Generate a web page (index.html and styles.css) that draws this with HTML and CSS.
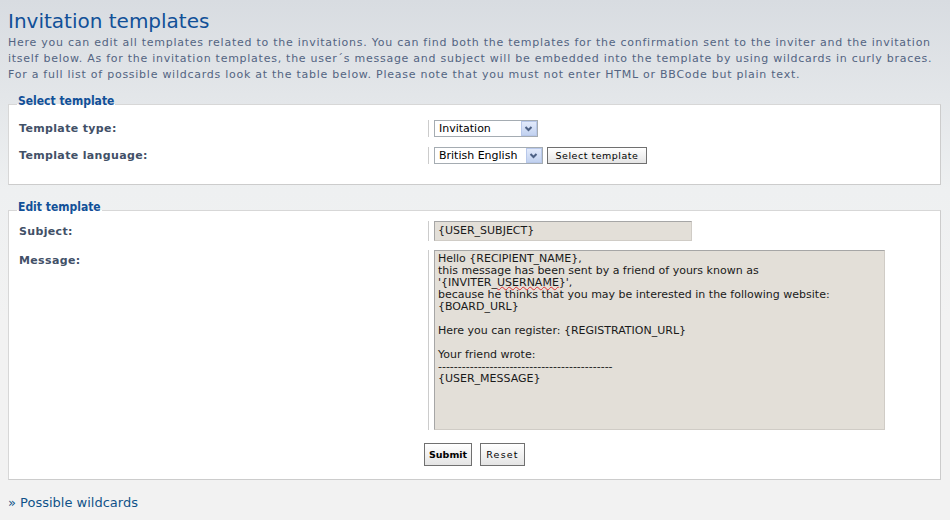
FILE: index.html
```html
<!DOCTYPE html>
<html lang="en">
<head>
<meta charset="utf-8">
<title>Invitation templates</title>
<link rel="stylesheet" href="styles.css">
</head>
<body>
<h1>Invitation templates</h1>
<p class="intro">Here you can edit all templates related to the invitations. You can find both the templates for the confirmation sent to the inviter and the invitation<br>itself below. As for the invitation templates, the user´s message and subject will be embedded into the template by using wildcards in curly braces.<br>For a full list of possible wildcards look at the table below. Please note that you must not enter HTML or BBCode but plain text.</p>

<form class="form">
  <fieldset class="fs fs-select">
    <legend>Select template</legend>
    <dl class="row">
      <dt><label>Template type:</label></dt>
      <dd>
        <span class="select select-type"><span class="val">Invitation</span><span class="arrow"><svg width="13" height="13" viewBox="0 0 13 13"><path d="M3.5 5 L6.5 8 L9.5 5" fill="none" stroke="#4d6185" stroke-width="2"/></svg></span></span>
      </dd>
    </dl>
    <dl class="row">
      <dt><label>Template language:</label></dt>
      <dd>
        <span class="select select-lang"><span class="val">British English</span><span class="arrow"><svg width="13" height="13" viewBox="0 0 13 13"><path d="M3.5 5 L6.5 8 L9.5 5" fill="none" stroke="#4d6185" stroke-width="2"/></svg></span></span>
        <button type="button" class="btn btn-select">Select template</button>
      </dd>
    </dl>
  </fieldset>

  <fieldset class="fs fs-edit">
    <legend>Edit template</legend>
    <dl class="row">
      <dt><label>Subject:</label></dt>
      <dd><span class="input">{USER_SUBJECT}</span></dd>
    </dl>
    <dl class="row row-top">
      <dt><label>Message:</label></dt>
      <dd><div class="textarea" role="textbox">Hello {RECIPIENT_NAME},
this message has been sent by a friend of yours known as
'{INVITER_<span class="spell">USERNAME</span>}',
because he thinks that you may be interested in the following website:
{BOARD_URL}

Here you can register: {REGISTRATION_URL}

Your friend wrote:
--------------------------------------------
{USER_MESSAGE}</div></dd>
    </dl>
    <p class="buttons">
      <button type="submit" class="btn btn-submit">Submit</button>
      <button type="reset" class="btn btn-reset">Reset</button>
    </p>
  </fieldset>
</form>

<p class="more"><a href="#">» Possible wildcards</a></p>
</body>
</html>
```

FILE: styles.css
```css
html {
  background: #f2f2f2;
}

body {
  margin: 0;
  padding: 0 9px 1px 8px;
  min-height: 519px;
  background: linear-gradient(#d8dce1 0, #eef0f1 190px, #f2f2f2 320px) no-repeat;
  font-family: "DejaVu Sans", Verdana, sans-serif;
  font-size: 11px;
  color: #536482;
}

h1 {
  margin: 9px 0 0;
  font-size: 20px;
  line-height: 24px;
  font-weight: normal;
  color: #115098;
}

.intro {
  margin: 2px 0 0;
  line-height: 16px;
  letter-spacing: 0.74px;
  white-space: nowrap;
}

.form {
  margin: 0;
}

.fs {
  margin: 11px 0 0;
  padding: 0 10px;
  border: 1px solid #cccccc;
  border-top-color: #d7d7d7;
  border-left-color: #d7d7d7;
  background: #ffffff;
}

.fs-select {
  padding-top: 6px;
  padding-bottom: 20px;
}

.fs-edit {
  margin-top: 15px;
  padding-top: 1px;
  padding-bottom: 13px;
}

legend {
  margin-left: -2px;
  padding: 0 1px 6px;
  font-family: "DejaVu Sans Condensed", "DejaVu Sans", sans-serif;
  font-stretch: semi-condensed;
  font-size: 12px;
  line-height: 14px;
  font-weight: bold;
  color: #115098;
}

.row {
  display: flex;
  align-items: center;
  margin: 0;
}

.row + .row {
  margin-top: 10px;
}

.fs-edit .row + .row {
  margin-top: 9px;
}

.row-top {
  align-items: flex-start;
}

.row-top dt {
  padding-top: 4px;
}

.row dt {
  flex: none;
  width: calc(45% - 1px);
  margin: 0;
}

.row dd {
  display: flex;
  align-items: center;
  gap: 4px;
  margin: 0;
  padding-left: 5px;
  border-left: 1px solid #cccccc;
}

label {
  font-weight: bold;
  letter-spacing: 0.35px;
  color: #425067;
}

.select {
  display: inline-flex;
  align-items: center;
  box-sizing: border-box;
  height: 17px;
  border: 1px solid #a5acb2;
  background: #ffffff;
  color: #000000;
}

.select-type {
  width: 104px;
}

.select-lang {
  width: 109px;
}

.select .val {
  flex: 1;
  padding-left: 4px;
  line-height: 15px;
  white-space: nowrap;
}

.select .arrow {
  display: flex;
  align-items: center;
  justify-content: center;
  box-sizing: border-box;
  width: 16px;
  height: 15px;
  border: 1px solid #b8c8ea;
  background: linear-gradient(#e2eafb, #c2d2f0);
}

.btn {
  box-sizing: border-box;
  height: 17px;
  padding: 0 4px;
  border: 1px solid #707070;
  background: linear-gradient(#ffffff, #e4e4e4);
  font-family: "DejaVu Sans", Verdana, sans-serif;
  font-size: 9.5px;
  color: #000000;
}

.btn-select {
  width: 100px;
  letter-spacing: 0.5px;
}

.buttons {
  margin: 13px 0 0;
  text-align: center;
  font-size: 0;
}

.btn-submit,
.btn-reset {
  height: 23px;
  margin: 0 4px;
}

.btn-submit {
  width: 48px;
  font-weight: bold;
}

.btn-reset {
  width: 45px;
  letter-spacing: 1.2px;
}

.input,
.textarea {
  box-sizing: border-box;
  border: 1px solid;
  border-color: #a6a6a6 #d0ccc6 #d0ccc6 #a6a6a6;
  background: #e3dfd8;
  color: #1a1a1a;
  font-size: 11px;
}

.input {
  display: block;
  width: 258px;
  height: 20px;
  padding: 0 3px;
  line-height: 18px;
}

.textarea {
  width: 451px;
  height: 180px;
  padding: 2px 3px;
  line-height: 12px;
  white-space: pre;
}

.spell {
  text-decoration: underline wavy #e03030;
  text-decoration-thickness: 1px;
  text-underline-offset: 0;
}

.more {
  margin: 15px 0 0;
  font-size: 13px;
  line-height: 16px;
}

.more a {
  color: #105289;
  text-decoration: none;
}
```
